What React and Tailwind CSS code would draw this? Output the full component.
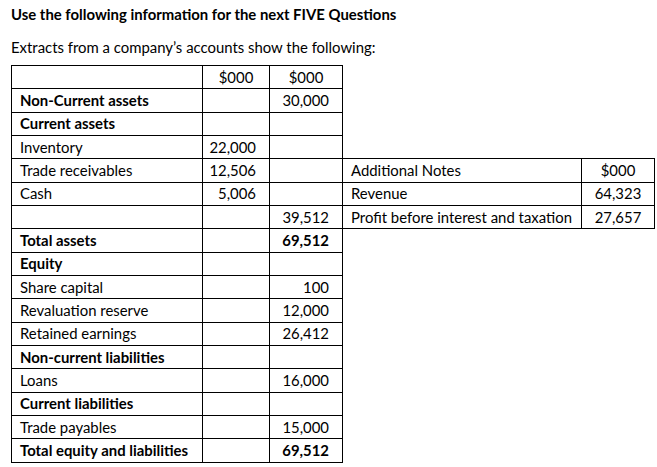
const rows = [
  { label: '', a: '$000', b: '$000', head: true },
  { label: 'Non-Current assets', b: '30,000', bold: true },
  { label: 'Current assets', bold: true },
  { label: 'Inventory', a: '22,000' },
  { label: 'Trade receivables', a: '12,506' },
  { label: 'Cash', a: '5,006' },
  { label: '', b: '39,512' },
  { label: 'Total assets', b: '69,512', bold: true, boldNum: true },
  { label: 'Equity', bold: true },
  { label: 'Share capital', b: '100' },
  { label: 'Revaluation reserve', b: '12,000' },
  { label: 'Retained earnings', b: '26,412' },
  { label: 'Non-current liabilities', bold: true },
  { label: 'Loans', b: '16,000' },
  { label: 'Current liabilities', bold: true },
  { label: 'Trade payables', b: '15,000' },
  { label: 'Total equity and liabilities', b: '69,512', bold: true, boldNum: true },
];

const notes = [
  { label: 'Additional Notes', value: '$000' },
  { label: 'Revenue', value: '64,323' },
  { label: 'Profit before interest and taxation', value: '27,657' },
];

function App() {
  return (
    <div className="w-[657px] h-[467px] bg-white text-black pl-[11px] pt-[4px] font-['Lato','Liberation_Sans',sans-serif] text-[14.9px]">
      <div className="font-bold leading-[20px]">Use the following information for the next FIVE Questions</div>
      <div className="mt-[13px] leading-[20px]">Extracts from a company’s accounts show the following:</div>

      <div className="mt-[8px] flex items-start">
        <table className="table-fixed border-collapse w-[331px]">
          <colgroup>
            <col className="w-[191px]" />
            <col className="w-[67px]" />
            <col className="w-[73px]" />
          </colgroup>
          <tbody>
            {rows.map((r, i) => (
              <tr key={i} className="h-[23.33px]">
                <td className={`border border-black px-[8px] py-0 leading-none ${r.bold ? 'font-bold' : ''}`}>{r.label}</td>
                <td className={`border border-black py-0 leading-none ${r.head ? 'text-center' : 'text-right pr-[13px]'}`}>{r.a}</td>
                <td className={`border border-black py-0 leading-none ${r.head ? 'text-center' : 'text-right pr-[13px]'} ${r.boldNum ? 'font-bold' : ''}`}>{r.b}</td>
              </tr>
            ))}
          </tbody>
        </table>

        <table className="table-fixed border-collapse w-[312px] -ml-px mt-[93.33px]">
          <colgroup>
            <col className="w-[239px]" />
            <col className="w-[73px]" />
          </colgroup>
          <tbody>
            {notes.map((n) => (
              <tr key={n.label} className="h-[23.33px]">
                <td className="border border-black px-[8px] py-0 leading-none">{n.label}</td>
                <td className="border border-black py-0 leading-none text-center">{n.value}</td>
              </tr>
            ))}
          </tbody>
        </table>
      </div>
    </div>
  );
}

export default App;
